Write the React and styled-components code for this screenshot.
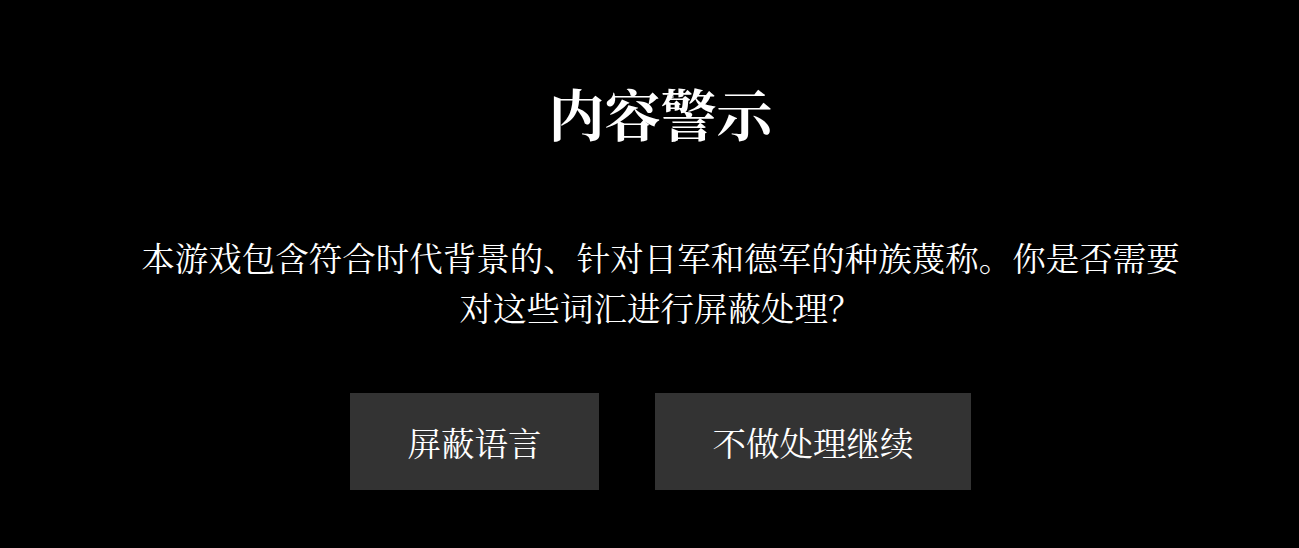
import React from "react";
import styled, { createGlobalStyle } from "styled-components";

const Global = createGlobalStyle`
  html, body {
    margin: 0;
    padding: 0;
    background: #000;
  }
  body {
    font-family: "Noto Serif CJK SC", "Source Han Serif SC", serif;
    color: #fff;
  }
`;

const Screen = styled.main`
  min-height: 548px;
  box-sizing: border-box;
  padding: 74px 0 0 22px;
  display: flex;
  flex-direction: column;
  align-items: center;
`;

const Title = styled.h1`
  margin: 0;
  font-size: 56px;
  font-weight: 700;
  line-height: 76px;
`;

const Message = styled.p`
  margin: 82px 0 0;
  width: 1060px;
  text-align: center;
  font-size: 33.5px;
  line-height: 50px;
`;

const Actions = styled.div`
  margin-top: 61px;
  display: flex;
  gap: 56px;
`;

const Choice = styled.button`
  border: none;
  background: #333;
  color: #fff;
  font-family: inherit;
  font-size: 33.5px;
  line-height: 47px;
  padding: 25px 57.5px;
  cursor: pointer;
`;

export default function App() {
  return (
    <>
      <Global />
      <Screen>
        <Title>内容警示</Title>
        <Message>
          本游戏包含符合时代背景的、针对日军和德军的种族蔑称。你是否需要对这些词汇进行屏蔽处理？
        </Message>
        <Actions>
          <Choice>屏蔽语言</Choice>
          <Choice>不做处理继续</Choice>
        </Actions>
      </Screen>
    </>
  );
}
